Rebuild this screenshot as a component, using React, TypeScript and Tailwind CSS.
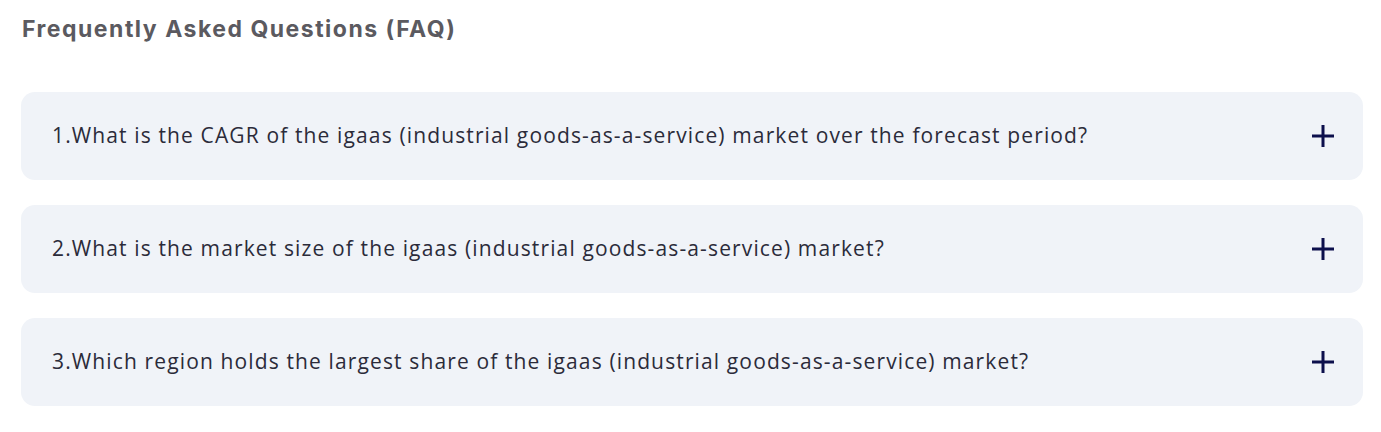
import React from "react";

const questions = [
  "1.What is the CAGR of the igaas (industrial goods-as-a-service) market over the forecast period?",
  "2.What is the market size of the igaas (industrial goods-as-a-service) market?",
  "3.Which region holds the largest share of the igaas (industrial goods-as-a-service) market?",
];

export default function App() {
  return (
    <div className="w-[1381px] h-[432px] bg-white px-[21px] pt-[13px]">
      <h2
        className="text-[23px] font-bold text-[#5b5a60] leading-[32px] pl-[1px] tracking-[1.5px]"
        style={{ fontFamily: "Inter, 'Open Sans', sans-serif" }}
      >
        Frequently Asked Questions (FAQ)
      </h2>
      <div className="mt-[47px] flex flex-col gap-[25px] w-[1342px]">
        {questions.map((q) => (
          <div
            key={q}
            className="h-[88px] rounded-[14px] bg-[#f0f3f8] flex items-center justify-between pl-[31px] pr-[29px]"
          >
            <span
              className="text-[21px] text-[#2b2b3a] tracking-[1.13px]"
              style={{ fontFamily: "'Open Sans', sans-serif" }}
            >
              {q}
            </span>
            <svg width="22" height="22" viewBox="0 0 22 22">
              <path d="M11 0V22M0 11H22" stroke="#0c0f4c" strokeWidth="3" />
            </svg>
          </div>
        ))}
      </div>
    </div>
  );
}
